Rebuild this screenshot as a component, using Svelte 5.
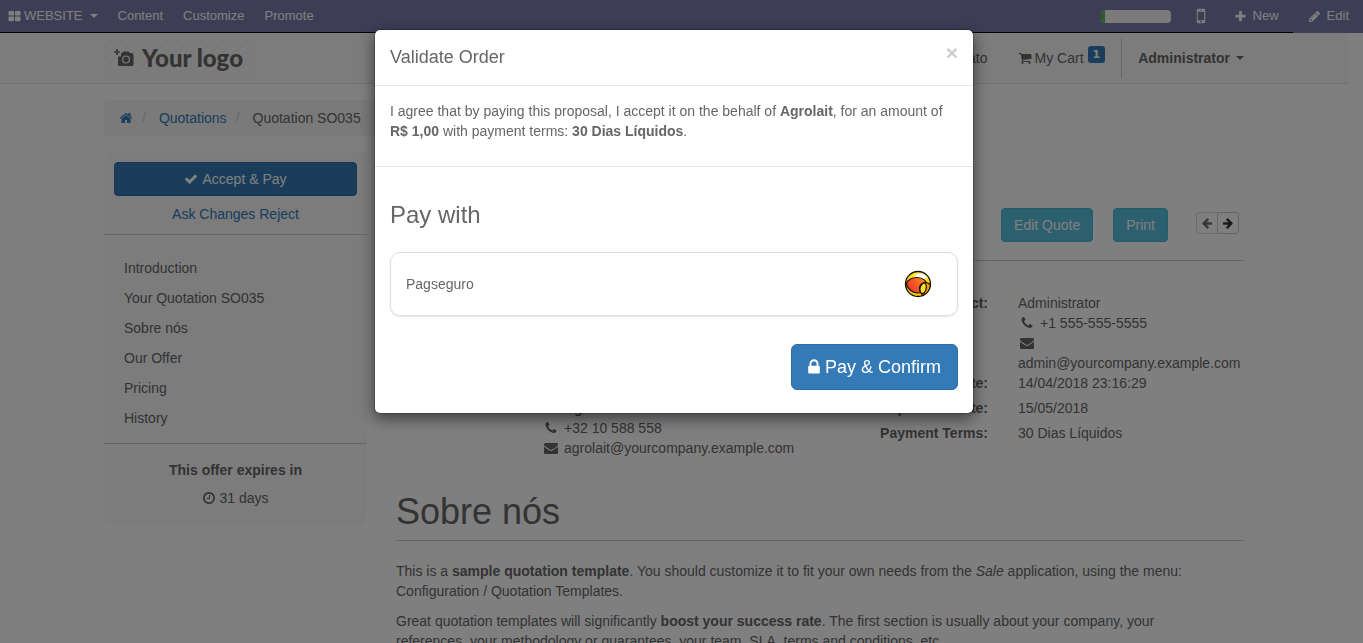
<script>
  const icons = {
    grid: 'M832 1024v384q0 52-38 90t-90 38h-512q-52 0-90-38t-38-90v-384q0-52 38-90t90-38h512q52 0 90 38t38 90zm0-768v384q0 52-38 90t-90 38h-512q-52 0-90-38t-38-90v-384q0-52 38-90t90-38h512q52 0 90 38t38 90zm896 768v384q0 52-38 90t-90 38h-512q-52 0-90-38t-38-90v-384q0-52 38-90t90-38h512q52 0 90 38t38 90zm0-768v384q0 52-38 90t-90 38h-512q-52 0-90-38t-38-90v-384q0-52 38-90t90-38h512q52 0 90 38t38 90z',
    plus: 'M1600 736v192q0 40-28 68t-68 28h-416v416q0 40-28 68t-68 28h-192q-40 0-68-28t-28-68v-416h-416q-40 0-68-28t-28-68v-192q0-40 28-68t68-28h416v-416q0-40 28-68t68-28h192q40 0 68 28t28 68v416h416q40 0 68 28t28 68z',
    pencil: 'M491 1536l91-91-235-235-91 91v107h128v128h107zm523-928q0-22-22-22-10 0-17 7l-542 542q-7 7-7 17 0 22 22 22 10 0 17-7l542-542q7-7 7-17zm-54-192l416 416-832 832h-416v-416zm683 96q0 53-37 90l-166 166-416-416 166-165q36-38 90-38 53 0 91 38l235 234q37 39 37 91z',
    mobile: 'M976 1408q0-33-23.5-56.5t-56.5-23.5-56.5 23.5-23.5 56.5 23.5 56.5 56.5 23.5 56.5-23.5 23.5-56.5zm208-160v-704q0-13-9.5-22.5t-22.5-9.5h-512q-13 0-22.5 9.5t-9.5 22.5v704q0 13 9.5 22.5t22.5 9.5h512q13 0 22.5-9.5t9.5-22.5zm-192-848q0-16-16-16h-160q-16 0-16 16t16 16h160q16 0 16-16zm288-16v1024q0 52-38 90t-90 38h-512q-52 0-90-38t-38-90v-1024q0-52 38-90t90-38h512q52 0 90 38t38 90z',
    cart: 'M704 1536q0 52-38 90t-90 38-90-38-38-90 38-90 90-38 90 38 38 90zm896 0q0 52-38 90t-90 38-90-38-38-90 38-90 90-38 90 38 38 90zm128-1088v512q0 24-16.5 42.5t-40.5 21.5l-1044 122q13 60 13 70 0 16-24 64h920q26 0 45 19t19 45-19 45-45 19h-1024q-26 0-45-19t-19-45q0-11 8-31.5t16-36 21.5-40 15.5-29.5l-177-823h-204q-26 0-45-19t-19-45 19-45 45-19h256q16 0 28.5 6.5t19.5 15.5 13 24.5 8 26 5.5 29.5 4.5 26h1201q26 0 45 19t19 45z',
    home: 'M1472 992v480q0 26-19 45t-45 19h-384v-384h-256v384h-384q-26 0-45-19t-19-45v-480q0-1 .5-3t.5-3l575-474 575 474q1 2 1 6zm223-69l-62 74q-8 9-21 11h-3q-13 0-21-7l-692-577-692 577q-12 8-24 7-13-2-21-11l-62-74q-8-10-7-23.5t11-21.5l719-599q32-26 76-26t76 26l244 204v-195q0-14 9-23t23-9h192q14 0 23 9t9 23v408l219 182q10 8 11 21.5t-7 23.5z',
    check: 'M1671 566q0 40-28 68l-724 724-136 136q-28 28-68 28t-68-28l-136-136-362-362q-28-28-28-68t28-68l136-136q28-28 68-28t68 28l294 295 656-657q28-28 68-28t68 28l136 136q28 28 28 68z',
    clock: 'M1024 544v448q0 14-9 23t-23 9h-320q-14 0-23-9t-9-23v-64q0-14 9-23t23-9h224v-352q0-14 9-23t23-9h64q14 0 23 9t9 23zm416 352q0-148-73-273t-198-198-273-73-273 73-198 198-73 273 73 273 198 198 273 73 273-73 198-198 73-273zm224 0q0 209-103 385.5t-279.5 279.5-385.5 103-385.5-103-279.5-279.5-103-385.5 103-385.5 279.5-279.5 385.5-103 385.5 103 279.5 279.5 103 385.5z',
    phone: 'M1600 1240q0 27-10 70.5t-21 68.5q-21 50-122 106-94 51-186 51-27 0-53-3.5t-57.5-12.5-47-14.5-55.5-20.5-49-18q-98-35-175-83-127-79-264-216t-216-264q-48-77-83-175-3-9-18-49t-20.5-55.5-14.5-47-12.5-57.5-3.5-53q0-92 51-186 56-101 106-122 25-11 68.5-21t70.5-10q14 0 21 3 18 6 53 76 11 19 30 54t35 63.5 31 53.5q3 4 17.5 25t21.5 35.5 7 28.5q0 20-28.5 50t-62 55-62 53-28.5 46q0 9 5 22.5t8.5 20.5 14 24 11.5 19q76 137 174 235t235 174q2 1 19 11.5t24 14 20.5 8.5 22.5 5q18 0 46-28.5t53-62 55-62 50-28.5q14 0 28.5 7t35.5 21.5 25 17.5q25 15 53.5 31t63.5 35 54 30q70 35 76 53 3 7 3 21z',
    envelope: 'M1792 710v794q0 66-47 113t-113 47h-1472q-66 0-113-47t-47-113v-794q44 49 101 87 362 246 497 345 57 42 92.5 65.5t94.5 48 110 24.5h2q51 0 110-24.5t94.5-48 92.5-65.5q170-123 498-345 57-39 100-87zm0-294q0 79-49 151t-122 123q-376 261-468 325-10 7-42.5 31t-54 38.5-52 32.5-57.5 27-50 9h-2q-23 0-50-9t-57.5-27-52-32.5-54-38.5-42.5-31q-91-64-262-182.5t-205-142.5q-62-42-117-115.5t-55-136.5q0-78 41.5-130t118.500-52h1472q65 0 112.500 47t47.500 113z',
    lock: 'M640 768h512v-192q0-106-75-181t-181-75-181 75-75 181v192zm832 96v576q0 40-28 68t-68 28h-960q-40 0-68-28t-28-68v-576q0-40 28-68t68-28h32v-192q0-184 132-316t316-132 316 132 132 316v192h32q40 0 68 28t28 68z',
    left: 'M1664 896v128q0 53-32.500 90.500t-84.500 37.500h-704l293 294q38 36 38 90t-38 90l-75 76q-37 37-90 37-52 0-91-37l-651-652q-37-37-37-90 0-52 37-91l651-650q38-38 91-38 52 0 90 38l75 74q38 38 38 91t-38 91l-293 293h704q52 0 84.500 37.500t32.500 90.500z'
  };
  const sections = ['Introduction', 'Your Quotation SO035', 'Sobre nós', 'Our Offer', 'Pricing', 'History'];
  const progress = 7;
</script>

{#snippet icon(name, cls = '')}
  <svg class="icon {cls}" viewBox="0 0 1792 1792" aria-hidden="true"><path d={icons[name]} /></svg>
{/snippet}

<nav class="topbar" aria-label="Website editor">
  <div class="top-menu">
    <a href="#website" class="website">{@render icon('grid')}WEBSITE<span class="caret"></span></a>
    <a href="#content">Content</a>
    <a href="#customize">Customize</a>
    <a href="#promote">Promote</a>
  </div>
  <div class="top-tools">
    <div class="progress" role="progressbar" aria-label="Setup" aria-valuenow={progress}>
      <div class="bar" style="width: {progress}%"></div>
    </div>
    <a href="#mobile" class="mobile" aria-label="Mobile preview">{@render icon('mobile')}</a>
    <a href="#new">{@render icon('plus')}New</a>
    <a href="#edit">{@render icon('pencil')}Edit</a>
  </div>
</nav>

<div class="page">
  <header class="navbar">
    <div class="container nav-inner">
      <a href="#home" class="logo">
        <svg class="camera" viewBox="0 0 20 18" aria-hidden="true">
          <path d="M4 7.500h3V4h1l1.500-1.500h5L16 4h2l1.500 1.500v10L18.500 17H5l-1-1z" />
          <circle class="lens" cx="12" cy="10.500" r="3.400" />
          <path d="M2.200 0h1.600v2.200H6v1.600H3.800V6H2.200V3.800H0V2.200h2.200z" />
        </svg>
        <span>Your logo</span>
      </a>
      <div class="nav-links">
        <a href="#contact">Contato</a>
        <a href="#cart" class="cart">{@render icon('cart')}My Cart<span class="badge">1</span></a>
        <a href="#user" class="user">Administrator<span class="caret"></span></a>
      </div>
    </div>
  </header>

  <div class="container">
    <ol class="breadcrumb">
      <li><a href="#home" aria-label="Home">{@render icon('home')}</a></li>
      <li><a href="#quotations">Quotations</a></li>
      <li>Quotation SO035</li>
    </ol>

    <div class="columns">
      <aside class="sidebar">
        <div class="actions">
          <button class="btn primary">{@render icon('check')}Accept &amp; Pay</button>
          <div class="more"><a href="#ask">Ask Changes</a> <a href="#reject">Reject</a></div>
        </div>
        <ul>
          {#each sections as s}
            <li><a href="#section">{s}</a></li>
          {/each}
        </ul>
        <div class="expiry">
          <strong>This offer expires in</strong>
          <div class="days">{@render icon('clock')}31 days</div>
        </div>
      </aside>

      <main>
        <div class="toolbar">
          <button class="btn info">Edit Quote</button>
          <button class="btn info">Print</button>
          <div class="pager">
            <button disabled aria-label="Previous">{@render icon('left')}</button>
            <button aria-label="Next">{@render icon('left', 'flip')}</button>
          </div>
        </div>

        <div class="details">
          <div class="customer">
            <strong>Agrolait</strong>
            <div>{@render icon('phone')}+32 10 588 558</div>
            <div>{@render icon('envelope')}agrolait@yourcompany.example.com</div>
          </div>
          <dl>
            <dt>Contact:</dt>
            <dd>
              Administrator
              <div class="contact-line">{@render icon('phone')}+1 555-555-5555</div>
              <div class="contact-line">{@render icon('envelope')}</div>
              admin@yourcompany.example.com
            </dd>
            <dt>Date:</dt>
            <dd class="spaced">14/04/2018 23:16:29</dd>
            <dt>Expiration Date:</dt>
            <dd class="spaced">15/05/2018</dd>
            <dt>Payment Terms:</dt>
            <dd>30 Dias Líquidos</dd>
          </dl>
        </div>

        <h1>Sobre nós</h1>
        <p>This is a <strong>sample quotation template</strong>. You should customize it to fit your own needs from the <em>Sale</em> application, using the menu: Configuration / Quotation Templates.</p>
        <p>Great quotation templates will significantly <strong>boost your success rate</strong>. The first section is usually about your company, your references, your methodology or guarantees, your team, SLA, terms and conditions, etc.</p>
      </main>
    </div>
  </div>
</div>

<div class="backdrop">
  <div class="modal" role="dialog" aria-modal="true" aria-labelledby="modal-title">
    <div class="modal-head">
      <h4 id="modal-title">Validate Order</h4>
      <button class="close" aria-label="Close">×</button>
    </div>
    <div class="terms">
      I agree that by paying this proposal, I accept it on the behalf of <strong>Agrolait</strong>, for an amount of <strong>R$ 1,00</strong> with payment terms: <strong>30 Dias Líquidos</strong>.
    </div>
    <div class="payment">
      <h3>Pay with</h3>
      <div class="method">
        <span>Pagseguro</span>
        <svg class="ball" viewBox="0 0 28 28" aria-hidden="true">
          <defs>
            <linearGradient id="gold" x1="0" y1="0" x2="0" y2="1">
              <stop offset="0" stop-color="#ffe000" /><stop offset=".6" stop-color="#ffd000" /><stop offset="1" stop-color="#f8c800" />
            </linearGradient>
            <linearGradient id="flame" x1="0" y1=".7" x2="1" y2=".2">
              <stop offset="0" stop-color="#ef3030" /><stop offset=".5" stop-color="#f05a25" /><stop offset="1" stop-color="#ff9c10" />
            </linearGradient>
            <radialGradient id="shine"><stop offset="0" stop-color="#fff" /><stop offset=".4" stop-color="#fff" /><stop offset="1" stop-color="#fff" stop-opacity="0" /></radialGradient>
            <clipPath id="disc"><circle cx="14" cy="14" r="12.500" /></clipPath>
          </defs>
          <circle cx="14" cy="14" r="12.500" fill="url(#gold)" />
          <g clip-path="url(#disc)" stroke="#151000" stroke-width="1.200">
            <ellipse cx="17" cy="6.500" rx="9" ry="5" fill="url(#shine)" stroke="none" />
            <path d="M2 13.500C4 10 8 7.500 13 7.500C19 7.500 23 11 23 16C23 20 19 23 14 23C8 23 4 19 2 13.500Z" fill="url(#flame)" />
            <circle cx="21.500" cy="18.500" r="6" fill="#fb9a12" />
            <path d="M17 24l3-2 2 5h-5z" fill="#ed2626" stroke="none" />
            <path d="M20.500 12.800C23 14 23 19 20.500 22.500L17.500 24C15 21 15 15 20.500 12.800Z" fill="#f5e128" />
          </g>
          <circle cx="14" cy="14" r="12.500" fill="none" stroke="#151000" stroke-width="1.300" />
        </svg>
      </div>
      <div class="confirm">
        <button class="btn primary large">{@render icon('lock')}Pay &amp; Confirm</button>
      </div>
    </div>
  </div>
</div>

<style>
  :global(body) {
    margin: 0;
    overflow: hidden;
    background: #fff;
    color: #666;
    font: 14px/20px "Liberation Sans", Arial, sans-serif;
  }
  :global(*) { box-sizing: border-box; }
  a { color: #337ab7; text-decoration: none; }
  button { font: inherit; cursor: pointer; }
  .icon { width: 14px; height: 14px; fill: currentColor; flex: none; }
  .flip { transform: scaleX(-1); }
  .caret {
    border: 4px solid transparent;
    border-top-color: currentColor;
    border-bottom: 0;
    margin-left: 6px;
  }

  .topbar {
    display: flex;
    justify-content: space-between;
    height: 33px;
    padding: 0 14px 1px 8px;
    background: linear-gradient(#000, #000) left bottom / calc(100% - 70px) 1px no-repeat #7c7bad;
    font-size: 13px;
  }
  .topbar a { display: flex; align-items: center; color: #fff; }
  .topbar .icon { width: 13px; height: 13px; }
  .top-menu { display: flex; gap: 20px; }
  .website .icon { margin-right: 3px; }
  .website .caret { margin-left: 7px; }
  .top-tools { display: flex; align-items: center; gap: 29px; }
  .top-tools a .icon { margin-right: 6px; }
  .topbar .mobile .icon { width: 20px; height: 20px; margin: 0 -6px 0 -9px; }
  .progress {
    width: 70px;
    height: 13px;
    overflow: hidden;
    border-radius: 4px;
    background: #f5f5f5;
  }
  .bar { height: 100%; background: #5cb85c; }

  .page { padding-right: 15px; }
  .container { max-width: 1170px; margin: 0 auto; padding: 0 15px; }
  .navbar { height: 51px; background: #f8f8f8; border-bottom: 1px solid #e0e0e0; }
  .nav-inner { display: flex; align-items: center; justify-content: space-between; height: 50px; }
  .logo {
    display: flex;
    align-items: center;
    width: 150px;
    height: 40px;
    padding-left: 10px;
    gap: 8px;
    color: #666;
    background: repeating-linear-gradient(135deg, #f8f8f8 0 5px, #f4f4f4 5px 8px);
    font: 900 24px/40px Lato, sans-serif;
    white-space: nowrap;
  }
  .camera { width: 20px; height: 18px; fill: #666; }
  .camera .lens { fill: none; stroke: #e4e4e4; stroke-width: 1.4px; }
  .nav-links { display: flex; align-items: center; }
  .nav-links a { display: flex; align-items: center; height: 40px; color: #666; }
  .nav-links .cart { padding: 0 16px 0 30px; border-right: 1px solid #ccc; }
  .cart .icon { margin-right: 3px; }
  .badge {
    align-self: flex-start;
    margin: 8px 0 0 4px;
    padding: 0 5px;
    border-radius: 3px;
    background: #337ab7;
    color: #fff;
    font: bold 11px/17px "DejaVu Sans", sans-serif;
  }
  .nav-links .user { padding-left: 16px; font-weight: bold; }

  .breadcrumb {
    display: flex;
    width: 66%;
    margin: 16px 0;
    padding: 8px 15px;
    list-style: none;
    border-radius: 4px;
    background: #f5f5f5;
  }
  .breadcrumb li, .breadcrumb a { display: flex; align-items: center; }
  .breadcrumb li + li::before { content: "/"; padding: 0 13px 0 9px; color: #ccc; }

  .columns {
    display: grid;
    grid-template-columns: minmax(0, 263fr) minmax(0, 848fr);
    column-gap: 29px;
    align-items: start;
  }
  .sidebar { border-radius: 8px; background: #f8f8fb; }
  .btn {
    display: inline-flex;
    align-items: center;
    justify-content: center;
    gap: 4px;
    padding: 6px 12px;
    border: 1px solid;
    border-radius: 4px;
    color: #fff;
  }
  .primary { background: #337ab7; border-color: #2e6da4; }
  .info { background: #5bc0de; border-color: #46b8da; }
  .actions { padding: 10px; border-bottom: 1px solid #ccc; text-align: center; }
  .actions .btn { width: 100%; margin-bottom: 8px; }
  .sidebar ul { margin: 0; padding: 18px 20px 10px; list-style: none; border-bottom: 1px solid #ccc; }
  .sidebar li { padding: 5px 0; }
  .sidebar li a { color: #666; }
  .expiry { padding: 16px 10px; text-align: center; }
  .days { display: flex; align-items: center; justify-content: center; gap: 3px; padding-top: 8px; }

  .toolbar {
    display: flex;
    justify-content: flex-end;
    gap: 20px;
    margin-top: 56px;
    padding: 0 5px 18px;
    border-bottom: 1px solid #ccc;
  }
  .pager { display: flex; margin: 4px 0 0 8px; height: 22px; }
  .pager button {
    display: flex;
    align-items: center;
    width: 22px;
    padding: 0 4px;
    border: 1px solid #ccc;
    border-radius: 0 3px 3px 0;
    background: #fff;
    color: #333;
  }
  .pager button:first-child { margin-right: -1px; border-radius: 3px 0 0 3px; }
  .pager button:disabled { opacity: .7; }
  .pager .icon { width: 12px; height: 12px; }

  .details { display: flex; justify-content: space-between; padding-top: 32px; }
  .customer { padding: 105px 0 0 148px; }
  .customer strong { padding-left: 20px; }
  .customer .icon { margin-right: 6px; vertical-align: -2px; }
  .contact-line { display: flex; align-items: center; gap: 6px; height: 20px; padding-left: 2px; }
  dl { display: grid; grid-template-columns: auto 226px; align-content: start; column-gap: 30px; margin: 0; }
  dt { font-weight: bold; text-align: right; }
  dd { margin: 0; }
  .spaced { margin-bottom: 5px; }
  h1 { margin: 34px 0 20px; padding-bottom: 8px; border-bottom: 1px solid #ccc; font-size: 36px; font-weight: normal; line-height: 40px; }
  p { margin: 0 0 10px; padding-right: 20px; }

  .backdrop { position: fixed; inset: 0; padding: 29px 15px 0 0; background: rgba(0, 0, 0, .5); }
  .modal {
    max-width: 600px;
    margin: 0 auto;
    border: 1px solid rgba(0, 0, 0, .2);
    border-radius: 6px;
    background: #fff;
    background-clip: padding-box;
    box-shadow: 0 5px 15px rgba(0, 0, 0, .5);
  }
  .modal-head { display: flex; justify-content: space-between; padding: 14px 15px 15px; border-bottom: 1px solid #e5e5e5; }
  h4 { margin: 0; font-size: 18px; font-weight: normal; line-height: 26px; }
  .close { align-self: flex-start; padding: 0; border: 0; background: none; color: #ccc; font-size: 21px; font-weight: bold; line-height: 18px; }
  .terms { padding: 15px 15px 25px; border-bottom: 1px solid #e5e5e5; }
  .payment { padding: 35px 15px 23px; }
  h3 { margin: 0 0 24px; font-size: 24px; font-weight: normal; line-height: 26px; }
  .method {
    display: flex;
    align-items: center;
    justify-content: space-between;
    padding: 17px 25px 17px 15px;
    border: 1px solid #ddd;
    border-radius: 10px;
    box-shadow: 0 1px 2px rgba(0, 0, 0, .1);
  }
  .ball { width: 28px; height: 28px; }
  .confirm { display: flex; justify-content: flex-end; margin-top: 28px; }
  .large { padding: 10px 16px; border-radius: 6px; font-size: 18px; line-height: 24px; }
  .large .icon { width: 18px; height: 18px; margin: 0 -2px 0 -3px; }
</style>
